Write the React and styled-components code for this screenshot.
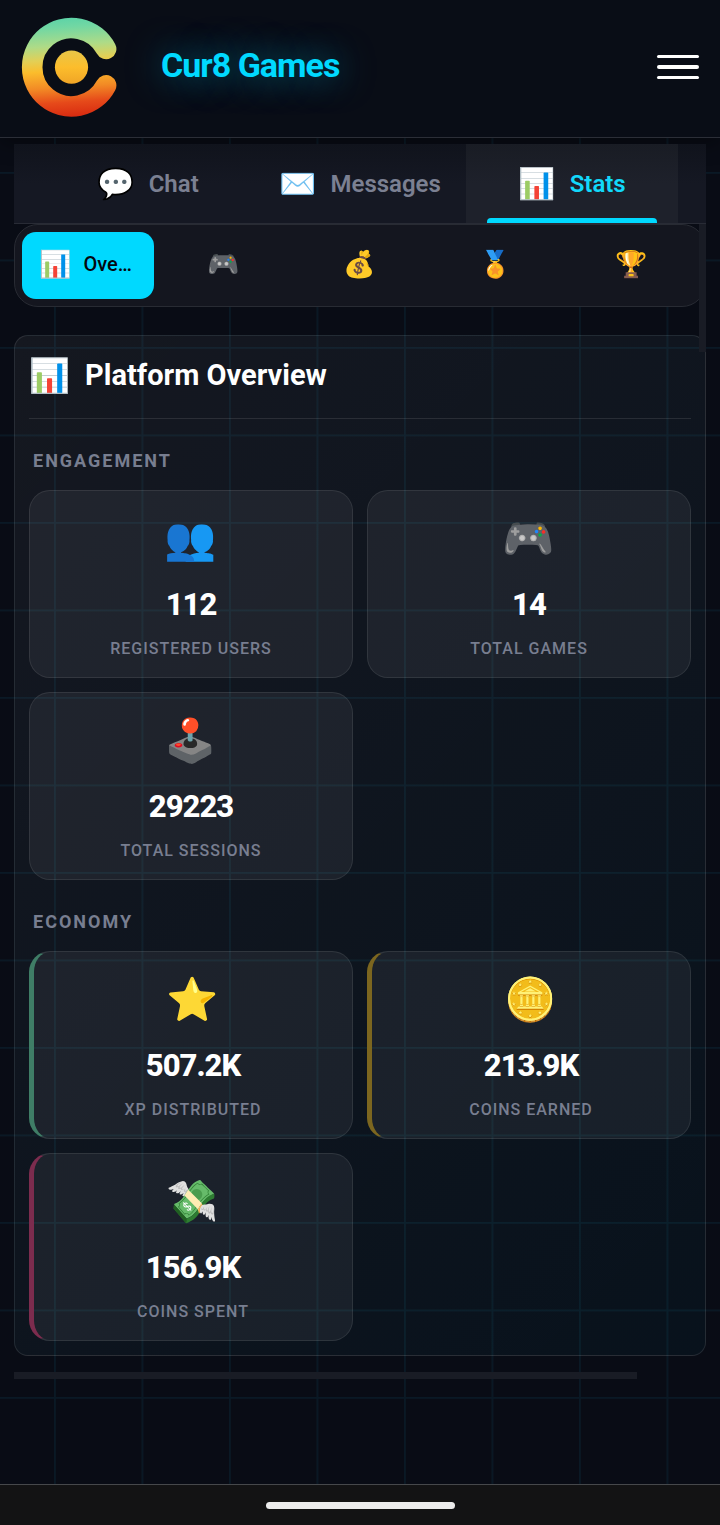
import React, { useState } from 'react';
import styled, { createGlobalStyle } from 'styled-components';

const GlobalStyle = createGlobalStyle`
    * {
        box-sizing: border-box;
    }
    body {
        margin: 0;
        background: #090c15;
        color: #fff;
        font-family: Roboto, "Noto Color Emoji", sans-serif;
    }
    button {
        font-family: inherit;
        border: 0;
        padding: 0;
        background: none;
        cursor: pointer;
    }
`

const Page = styled.div`
    position: relative;
    isolation: isolate;
    display: flex;
    flex-direction: column;
    min-height: 100vh;
`

const GridBackdrop = styled.svg`
    position: absolute;
    inset: 0;
    width: 100%;
    height: 100%;
    z-index: -1;
`

const Header = styled.header`
    display: flex;
    align-items: center;
    height: 138px;
    padding: 0 21px 3px;
    background: #090d16;
    border-bottom: 1px solid #2b2e37;
    box-shadow: 0 4px 20px rgba(0, 0, 0, 0.4);
`

const Logo = styled.svg`
    width: 100px;
    height: 100px;
    flex: none;
`

const Brand = styled.h1`
    flex: 1;
    margin: 0 0 4px 40px;
    color: #00d9ff;
    font-size: 34px;
    line-height: 40px;
    font-weight: 700;
    letter-spacing: -1px;
    text-shadow: 0 0 35px rgba(0, 217, 255, 0.5);
`

const MenuButton = styled.button`
    display: flex;
    flex-direction: column;
    gap: 7px;
    width: 42px;

    span {
        height: 3px;
        border-radius: 2px;
        background: #fff;
    }
    span:nth-child(2) {
        height: 4px;
    }
`

const Content = styled.main`
    flex: 1;
    padding: 6px 14px 105px;
`

const Tabs = styled.nav`
    display: flex;
    height: 80px;
    padding: 0 28px;
    background: linear-gradient(#10131c, #151823 50%);
    border-bottom: 1px solid #282b35;
`

const Tab = styled.button`
    flex: 1;
    display: flex;
    flex-direction: column;
    align-items: center;
    color: ${props => props.$active ? '#12d8fa' : '#7b8092'};
    background: ${props => props.$active ? 'rgba(255, 255, 255, 0.04)' : 'none'};
    font-size: 24px;
    font-weight: 600;

    &::after {
        content: "";
        width: 80%;
        height: 5px;
        border-radius: 4px 4px 0 0;
        background: ${props => props.$active ? '#00d9ff' : 'none'};
    }
`

const TabLabel = styled.span`
    flex: 1;
    display: flex;
    align-items: center;
    gap: 14px;
    padding-top: 6px;
`

const Emoji = styled.span`
    flex: none;
    font-family: "Noto Color Emoji", sans-serif;
    font-size: ${props => props.$size}px;
    line-height: 1;
    font-weight: 400;
`

const Scroller = styled.section`
    position: relative;
`

const ScrollThumb = styled.div`
    position: absolute;
    top: 0;
    right: 0;
    width: 7px;
    height: 128px;
    background: #191c25;
`

const SubTabs = styled.nav`
    display: flex;
    gap: 4px;
    height: 83px;
    padding: 7px;
    background: #14161f;
    border: 1px solid #282b33;
    border-radius: 24px;
`

const SubTab = styled.button`
    flex: 1 1 0;
    min-width: 0;
    display: flex;
    align-items: center;
    justify-content: center;
    gap: 12px;
    padding: 0 17px 3px;
    border-radius: 14px;
    font-size: 20px;
    font-weight: 500;
    color: #05080f;
    background: ${props => props.$active ? '#00d9ff' : 'none'};
`

const SubTabName = styled.span`
    flex: 1;
    min-width: 0;
    overflow: hidden;
    text-align: left;
    text-overflow: ellipsis;
    white-space: nowrap;
`

const Panel = styled.section`
    margin-top: 28px;
    padding: 14px;
    border: 1px solid rgba(255, 255, 255, 0.1);
    border-radius: 14px;
    background: linear-gradient(135deg, rgba(255, 255, 255, 0.05), rgba(0, 217, 255, 0.03));
`

const PanelTitle = styled.h2`
    display: flex;
    align-items: center;
    gap: 15px;
    height: 69px;
    margin: 0;
    padding-bottom: 18px;
    border-bottom: 1px solid rgba(255, 255, 255, 0.1);
    font-size: 29px;
    font-weight: 700;
`

const GroupTitle = styled.h3`
    margin: 29px 4px 17px;
    color: #787e90;
    font-size: 18px;
    line-height: 25px;
    font-weight: 700;
    letter-spacing: 2px;
    text-transform: uppercase;
`

const Cards = styled.div`
    display: grid;
    grid-template-columns: 1fr 1fr;
    gap: 14px;
`

const Card = styled.article`
    display: flex;
    flex-direction: column;
    align-items: center;
    height: 188px;
    padding-top: 27px;
    border: 1px solid rgba(255, 255, 255, 0.09);
    border-left: ${props => props.$accent ? `5px solid ${props.$accent}` : '1px solid rgba(255, 255, 255, 0.09)'};
    border-radius: 21px;
    background: rgba(255, 255, 255, 0.06);
`

const Value = styled.strong`
    margin-top: 27px;
    font-size: 31px;
    line-height: 36px;
    font-weight: 800;
    letter-spacing: -1px;
`

const Label = styled.span`
    margin-top: 16px;
    color: #787e90;
    font-size: 16px;
    line-height: 20px;
    font-weight: 500;
    letter-spacing: 1px;
    text-transform: uppercase;
`

const HorizontalThumb = styled.div`
    width: 90%;
    height: 7px;
    margin-top: 16px;
    background: #191c25;
`

const SystemBar = styled.footer`
    display: flex;
    align-items: center;
    justify-content: center;
    height: 41px;
    background: #131314;
    border-top: 1px solid #46484b;

    span {
        width: 189px;
        height: 7px;
        border-radius: 4px;
        background: #ececec;
    }
`

const tabs = [
    { icon: '💬', name: 'Chat' },
    { icon: '✉️', name: 'Messages' },
    { icon: '📊', name: 'Stats' }
]

const subTabs = [
    { icon: '📊', name: 'Overview' },
    { icon: '🎮', name: 'Games' },
    { icon: '💰', name: 'Economy' },
    { icon: '🏅', name: 'Achievements' },
    { icon: '🏆', name: 'Leaders' }
]

const groups = [
    {
        title: 'Engagement',
        cards: [
            { icon: '👥', value: '112', label: 'Registered Users' },
            { icon: '🎮', value: '14', label: 'Total Games' },
            { icon: '🕹️', value: '29223', label: 'Total Sessions' }
        ]
    },
    {
        title: 'Economy',
        cards: [
            { icon: '⭐', value: '507.2K', label: 'XP Distributed', accent: '#3f7d66' },
            { icon: '🪙', value: '213.9K', label: 'Coins Earned', accent: '#7c661f' },
            { icon: '💸', value: '156.9K', label: 'Coins Spent', accent: '#7c2c4e' }
        ]
    }
]

const GridLines = () => (
    <GridBackdrop aria-hidden="true">
        <defs>
            <pattern id="grid" width="87.5" height="87.5" x="54" y="172" patternUnits="userSpaceOnUse">
                <path d="M0.9 0V87.5M0 0.9H87.5" stroke="#1fb4e0" strokeOpacity="0.08" strokeWidth="1.8" />
            </pattern>
        </defs>
        <rect width="100%" height="100%" fill="url(#grid)" />
    </GridBackdrop>
)

const BrandLogo = () => (
    <Logo viewBox="21 18 100 100" aria-hidden="true">
        <defs>
            <linearGradient id="ring" gradientUnits="userSpaceOnUse" x1="66" y1="18" x2="73" y2="118">
                <stop offset="0" stopColor="#5bd3a8" />
                <stop offset="0.1" stopColor="#72d7a3" />
                <stop offset="0.28" stopColor="#aedb87" />
                <stop offset="0.42" stopColor="#e3cf55" />
                <stop offset="0.53" stopColor="#fbbd2c" />
                <stop offset="0.7" stopColor="#f28a25" />
                <stop offset="0.85" stopColor="#e64a1a" />
                <stop offset="1" stopColor="#d82a10" />
            </linearGradient>
            <linearGradient id="dot" x1="0" y1="0" x2="0" y2="1">
                <stop offset="0" stopColor="#e8c648" />
                <stop offset="0.5" stopColor="#fcbd2c" />
                <stop offset="1" stopColor="#f0a526" />
            </linearGradient>
        </defs>
        <path d="M106.1 50A39.2 39.2 0 1 0 106.1 86.4" fill="none" stroke="url(#ring)" strokeWidth="20.6" strokeLinecap="round" />
        <circle cx="71.5" cy="68.2" r="16.6" fill="url(#dot)" />
    </Logo>
)

const App = () => {
    const [tab, setTab] = useState('Stats')
    const [subTab, setSubTab] = useState('Overview')

    return (
        <Page>
            <GlobalStyle />
            <GridLines />
            <Header>
                <BrandLogo />
                <Brand>Cur8 Games</Brand>
                <MenuButton aria-label="Menu">
                    <span /><span /><span />
                </MenuButton>
            </Header>
            <Content>
                <Tabs>
                    {tabs.map(t => (
                        <Tab key={t.name} $active={t.name === tab} onClick={() => setTab(t.name)}>
                            <TabLabel>
                                <Emoji $size={30}>{t.icon}</Emoji>
                                {t.name}
                            </TabLabel>
                        </Tab>
                    ))}
                </Tabs>
                <Scroller>
                    <SubTabs>
                        {subTabs.map(t => (
                            <SubTab key={t.name} aria-label={t.name} $active={t.name === subTab} onClick={() => setSubTab(t.name)}>
                                <Emoji $size={26}>{t.icon}</Emoji>
                                {t.name === subTab && <SubTabName>{t.name}</SubTabName>}
                            </SubTab>
                        ))}
                    </SubTabs>
                    <Panel>
                        <PanelTitle>
                            <Emoji $size={33}>📊</Emoji>
                            Platform Overview
                        </PanelTitle>
                        {groups.map(group => (
                            <React.Fragment key={group.title}>
                                <GroupTitle>{group.title}</GroupTitle>
                                <Cards>
                                    {group.cards.map(card => (
                                        <Card key={card.label} $accent={card.accent}>
                                            <Emoji $size={42}>{card.icon}</Emoji>
                                            <Value>{card.value}</Value>
                                            <Label>{card.label}</Label>
                                        </Card>
                                    ))}
                                </Cards>
                            </React.Fragment>
                        ))}
                    </Panel>
                    <ScrollThumb />
                </Scroller>
                <HorizontalThumb />
            </Content>
            <SystemBar><span /></SystemBar>
        </Page>
    )
}

export default App;
